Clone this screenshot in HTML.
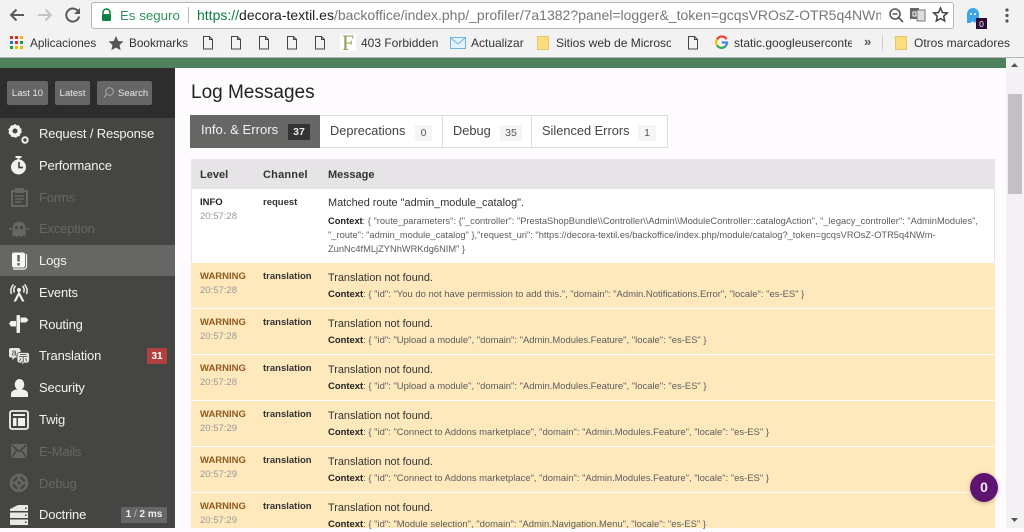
<!DOCTYPE html>
<html><head><meta charset="utf-8"><style>
*{box-sizing:border-box}
html,body{margin:0;padding:0;width:1024px;height:528px;overflow:hidden;background:#fdfbfd;font-family:"Liberation Sans",Arial,sans-serif}
.a{position:absolute;white-space:nowrap}
svg{position:absolute;overflow:visible}
.bm{font-size:11.8px;color:#333;top:36px;line-height:14px}
.nav{position:absolute;left:39px;margin-top:1px;font-size:13px;color:#f2f2f0;line-height:16px;white-space:nowrap;letter-spacing:-.15px}
.nav.d{color:#666764}
.row{position:absolute;left:191px;width:804px;background:#fee9bd}
.lv{position:absolute;left:9px;top:6.500px;font-size:9.5px;font-weight:bold;color:#8e5a1e;line-height:13px}
.tm{position:absolute;left:9px;top:20.500px;font-size:9.5px;color:#999;line-height:13px}
.ch{position:absolute;left:72px;top:6.500px;font-size:9.5px;font-weight:bold;color:#333;line-height:13px}
.ms{position:absolute;left:137px;top:8px;font-size:10.9px;color:#333;line-height:14px;white-space:nowrap}
.cx{position:absolute;left:137px;top:25px;font-size:9.45px;color:#5c5c5c;line-height:14px;white-space:nowrap}
.cx b{color:#222}
.tab{position:absolute;top:115px;height:33px;background:#fff;border:1px solid #ddd;border-left:0;font-size:12.8px;color:#444}
.tab span{position:absolute;top:6px;line-height:17px;white-space:nowrap}
.tab i{position:absolute;font-style:normal;top:9px;height:16px;background:#f5f5f5;color:#555;font-size:10.5px;line-height:17px;text-align:center}
</style></head><body>

<!-- browser chrome -->
<div class="a" style="left:0;top:0;width:1024px;height:58px;background:#f2f2f2;border-bottom:1px solid #b5b5b5"></div>
<svg style="left:0;top:0" width="90" height="30" fill="none"><path d="M24 15H11M16.500 9.500L11 15l5.500 5.500" stroke="#5a5a5a" stroke-width="2"/><path d="M38 15h13M45.500 9.500L51 15l-5.500 5.500" stroke="#c4c4c4" stroke-width="2"/><path d="M78.500 12a6.500 6.500 0 1 0 .6 4.500" stroke="#5a5a5a" stroke-width="2"/><path d="M80 8v6h-6z" fill="#5a5a5a"/></svg>
<div class="a" style="left:91px;top:2px;width:863px;height:27px;background:#fff;border:1px solid #b4b4b4;border-radius:3px"></div>
<svg style="left:100px;top:8px" width="14" height="14"><path d="M3 6V4.500a3.500 3.500 0 0 1 7 0V6" fill="none" stroke="#0b8043" stroke-width="1.500"/><rect x="2" y="6" width="9" height="7" rx="1" fill="#0b8043"/></svg>
<div class="a" style="left:120px;top:7px;font-size:13.300px;line-height:17px;color:#0b8043;opacity:.85">Es seguro</div>
<div class="a" style="left:188px;top:7px;width:1px;height:16px;background:#bbb"></div>
<div class="a" style="left:197px;top:7px;width:684px;overflow:hidden;font-size:14px;line-height:17px;color:#777"><span style="color:#0b8043">https://</span><span style="color:#222">decora-textil.es</span>/backoffice/index.php/_profiler/7a1382?panel=logger&amp;_token=gcqsVROsZ-OTR5q4NWm</div>
<svg style="left:888px;top:7px" width="16" height="16" fill="none" stroke="#555" stroke-width="1.600"><circle cx="7" cy="7" r="5"/><path d="M11 11l4 4M4.500 7h5"/></svg>
<svg style="left:910px;top:7px" width="16" height="16"><rect x="0" y="1" width="9" height="11" fill="#666"/><rect x="7" y="3" width="8" height="11" fill="#ddd" stroke="#777"/><path d="M3 5h3v4H3z" fill="none" stroke="#fff"/></svg>
<svg style="left:932px;top:6px" width="17" height="17"><path d="M8.500 2l2 4.500 4.800.5-3.600 3.200 1 4.800-4.200-2.500L4.300 15l1-4.800L1.700 7l4.800-.5z" fill="none" stroke="#444" stroke-width="1.500"/></svg>
<svg style="left:966px;top:7px" width="14" height="18"><path d="M1 16V7a6 6 0 0 1 12 0v9l-2.500-2-2 2-2-2-2 2z" fill="#3da4e8"/><circle cx="5" cy="7" r="1" fill="#fff"/><circle cx="9" cy="7" r="1" fill="#fff"/></svg>
<div class="a" style="left:976px;top:18px;width:11px;height:11px;background:#2a0a36;color:#fff;font-size:8.500px;line-height:12px;text-align:center">0</div>
<svg style="left:1005px;top:8px" width="4" height="15" fill="#555"><circle cx="2" cy="2" r="1.600"/><circle cx="2" cy="7.500" r="1.600"/><circle cx="2" cy="13" r="1.600"/></svg>

<!-- bookmarks -->
<svg style="left:10px;top:36px" width="14" height="14"><g fill="#d93025"><rect width="3" height="3"/><rect x="5" width="3" height="3"/></g><rect x="10" width="3" height="3" fill="#f4b400"/><g fill="#1a73e8"><rect y="5" width="3" height="3"/><rect x="5" y="5" width="3" height="3" fill="#d93025"/><rect x="10" y="5" width="3" height="3" fill="#0f9d58"/></g><rect y="10" width="3" height="3" fill="#0f9d58"/><rect x="5" y="10" width="3" height="3" fill="#f4b400"/><rect x="10" y="10" width="3" height="3" fill="#f4b400"/></svg>
<div class="a bm" style="left:30px">Aplicaciones</div>
<svg style="left:108px;top:35px" width="16" height="16"><path d="M8 1l2.200 5 5.300.5-4 3.500 1.200 5.200L8 12.500 3.300 15.200 4.500 10 .5 6.500 5.800 6z" fill="#555"/></svg>
<div class="a bm" style="left:129px">Bookmarks</div>
<svg style="left:0;top:0" width="0" height="0"><defs><path id="pg" d="M.5.500h6l3 3v9.500h-9zM6.500.500v3h3" fill="none" stroke="#444"/></defs></svg>
<svg style="left:203px;top:36px" width="11" height="14"><use href="#pg"/></svg>
<svg style="left:231px;top:36px" width="11" height="14"><use href="#pg"/></svg>
<svg style="left:259px;top:36px" width="11" height="14"><use href="#pg"/></svg>
<svg style="left:287px;top:36px" width="11" height="14"><use href="#pg"/></svg>
<svg style="left:315px;top:36px" width="11" height="14"><use href="#pg"/></svg>
<div class="a" style="left:340px;top:34px;width:16px;height:17px;background:#fff;color:#9a9a5a;font-family:'Liberation Serif',serif;font-size:22px;line-height:18px;text-align:center">F</div>
<div class="a bm" style="left:361px;font-size:12px">403 Forbidden</div>
<svg style="left:450px;top:37px" width="16" height="12"><rect x=".5" y=".5" width="15" height="11" fill="#e4f2fb" stroke="#6fb3e0"/><path d="M.5.500L8 7l7.500-6.500" fill="none" stroke="#6fb3e0"/></svg>
<div class="a bm" style="left:471px;font-size:12px">Actualizar</div>
<svg style="left:537px;top:36px" width="12" height="14"><rect x=".5" y=".5" width="11" height="13" fill="#fbdd7e" stroke="#e5c66c"/></svg>
<div class="a bm" style="left:556px;width:115px;overflow:hidden;font-size:12px">Sitios web de Microso</div>
<svg style="left:688px;top:36px" width="11" height="14"><use href="#pg"/></svg>
<svg style="left:715px;top:36px" width="13" height="13" fill="none" stroke-width="2.200"><path d="M11.500 3.200A5.400 5.400 0 0 0 2 3.500" stroke="#ea4335"/><path d="M2 3.500a5.400 5.400 0 0 0 0 5.800" stroke="#fbbc05"/><path d="M2 9.300a5.400 5.400 0 0 0 8.600.8" stroke="#34a853"/><path d="M10.600 10.100A5.400 5.400 0 0 0 12 6.500H6.800" stroke="#4285f4"/></svg>
<div class="a bm" style="left:734px;width:118px;overflow:hidden;font-size:12px">static.googleuserconte</div>
<div class="a" style="left:864px;top:35px;font-size:13px;line-height:14px;color:#555;font-weight:bold">»</div>
<div class="a" style="left:882px;top:35px;width:1px;height:16px;background:#ccc"></div>
<svg style="left:895px;top:36px" width="12" height="14"><rect x=".5" y=".5" width="11" height="13" fill="#fbdd7e" stroke="#e5c66c"/></svg>
<div class="a bm" style="left:914px;font-size:12px">Otros marcadores</div>

<!-- page -->
<div class="a" style="left:0;top:58px;width:1006px;height:10px;background:#4f805c"></div>
<div class="a" style="left:0;top:68px;width:175px;height:50px;background:#2d2d2d"></div>
<div class="a" style="left:0;top:118px;width:175px;height:410px;background:#454643"></div>
<div class="a" style="left:7px;top:81px;width:41px;height:24px;background:#666;border-radius:2px;color:#e8e8e8;font-size:9.500px;line-height:25px;text-align:center">Last 10</div>
<div class="a" style="left:55px;top:81px;width:35px;height:24px;background:#666;border-radius:2px;color:#e8e8e8;font-size:9.500px;line-height:25px;text-align:center">Latest</div>
<div class="a" style="left:97px;top:81px;width:55px;height:24px;background:#666;border-radius:2px;color:#e8e8e8;font-size:9.500px;line-height:25px;padding-left:21px">Search</div>
<svg style="left:103px;top:87px" width="11" height="12" fill="none" stroke="#aaa" stroke-width="1"><circle cx="6.500" cy="4.500" r="3.800"/><path d="M3.800 7.300L.8 10.500"/></svg>

<!-- nav -->
<div class="a" style="left:0;top:245px;width:175px;height:31px;background:#666764"></div>
<div class="nav" style="top:125px">Request / Response</div>
<div class="nav" style="top:157px">Performance</div>
<div class="nav d" style="top:189px">Forms</div>
<div class="nav d" style="top:220px">Exception</div>
<div class="nav" style="top:252px">Logs</div>
<div class="nav" style="top:284px">Events</div>
<div class="nav" style="top:316px">Routing</div>
<div class="nav" style="top:347px">Translation</div>
<div class="nav" style="top:379px">Security</div>
<div class="nav" style="top:411px">Twig</div>
<div class="nav d" style="top:443px">E-Mails</div>
<div class="nav d" style="top:475px">Debug</div>
<div class="nav" style="top:506px">Doctrine</div>

<!-- nav icons -->
<svg style="left:8px;top:124px" width="22" height="22" fill="none" stroke="#f0f0ee"><circle cx="7" cy="7" r="4.300" stroke-width="3.600"/><circle cx="7" cy="7" r="6.200" stroke-width="1" stroke-dasharray="2 2"/><circle cx="17" cy="16" r="2.700" stroke-width="2"/></svg>
<svg style="left:9px;top:156px" width="20" height="20"><rect x="6.500" y="0" width="6" height="2" fill="#f0f0ee"/><rect x="8.500" y="1" width="2" height="3" fill="#f0f0ee"/><circle cx="9.500" cy="11" r="7.500" fill="#f0f0ee"/><path d="M10 6v5.500h4" fill="none" stroke="#454643" stroke-width="1.700"/></svg>
<svg style="left:11px;top:188px" width="17" height="19" fill="none" stroke="#666764" stroke-width="2"><rect x="1" y="3" width="15" height="15"/><rect x="5" y="1" width="7" height="3" fill="#666764"/><path d="M4 8h9M4 11h9M4 14h6" stroke-width="1.500"/></svg>
<svg style="left:9px;top:221px" width="20" height="17" fill="#666764"><path d="M3.500 7a6.500 6.500 0 0 1 13 0v9l-2.500-1.500-2 1.500-2-1.500-2 1.500-2-1.500L3.500 16z"/><path d="M0 7h3v1.500H0zM17 7h3v1.500h-3z"/><rect x="6" y="5" width="3" height="3" fill="#454643"/><rect x="11" y="5" width="3" height="3" fill="#454643"/></svg>
<svg style="left:11px;top:252px" width="17" height="19"><rect x="1" y="0.500" width="13" height="15" rx="2" fill="#f8f8f6"/><rect x="6.300" y="3" width="2.500" height="6.500" fill="#666764"/><rect x="6.300" y="11" width="2.500" height="2.500" fill="#666764"/><path d="M15.500 2v12.500a2.500 2.500 0 0 1-2.500 2.500H2" fill="none" stroke="#f5f5f3" stroke-width="1.200"/></svg>
<svg style="left:9px;top:283px" width="20" height="20" fill="none" stroke="#f0f0ee" stroke-width="1.600"><circle cx="10" cy="7" r="2" fill="#f0f0ee" stroke="none"/><path d="M10 8L4.500 18.500h2.500L10 12.500l3 6h2.500z" fill="#f0f0ee" stroke="none"/><path d="M5.500 9.500a5.500 5.500 0 0 1 1-6.500M14.500 9.500a5.500 5.500 0 0 0-1-6.500M2.500 11a9 9 0 0 1 2-9.500M17.500 11a9 9 0 0 0-2-9.500"/></svg>
<svg style="left:9px;top:315px" width="20" height="20" fill="#f0f0ee"><rect x="7.500" y="0" width="3.500" height="18" rx="1"/><path d="M0 8.500L2 6h5v5.500H2zM11.500 2.500h5.500l2.500 2.500-2.500 2.500h-5.500z"/></svg>
<svg style="left:9px;top:346px" width="21" height="21"><path d="M2 2h7a2.500 2.500 0 0 1 2.500 2.500V9A2.500 2.500 0 0 1 9 11.500H6L3.500 14v-2.500H2A2 2 0 0 1 0 9.500V4a2 2 0 0 1 2-2z" fill="#e8e8e6"/><text x="2.500" y="9.500" font-size="9" fill="#454643" font-family="Liberation Sans, sans-serif">a</text><path d="M10.500 6.500h8a2.500 2.500 0 0 1 2 2.500v5.500a2.500 2.500 0 0 1-2.500 2.500H15l-2 3v-3h-2.500A2.500 2.500 0 0 1 8 14.500V9a2.500 2.500 0 0 1 2.500-2.500z" fill="#e8e8e6" stroke="#454643" stroke-width=".8"/><text x="9.500" y="15.500" font-size="9.500" fill="#454643" font-family="Noto Sans CJK SC, sans-serif">示</text></svg>
<svg style="left:11px;top:379px" width="17" height="18" fill="#f0f0ee"><ellipse cx="8.500" cy="5.500" rx="4.800" ry="5.500"/><path d="M0 18v-3c0-3 3-4 5-4.500h7c2 .5 5 1.500 5 4.500v3z"/></svg>
<svg style="left:9px;top:410px" width="20" height="20" fill="none"><rect x="1" y="1" width="18" height="18" rx="2" stroke="#f0f0ee" stroke-width="1.800"/><path d="M4 5h12" stroke="#f0f0ee" stroke-width="2"/><rect x="4" y="8" width="3.500" height="8" fill="#f0f0ee"/><rect x="9" y="8" width="7" height="8" fill="#f0f0ee"/></svg>
<svg style="left:11px;top:444px" width="16" height="14" fill="none"><rect width="16" height="14" fill="#666764"/><path d="M.5 1L8 7.500 15.500 1M.5 13.500L6 6M15.500 13.500L10 6" stroke="#454643" stroke-width="1.500"/></svg>
<svg style="left:9px;top:473px" width="20" height="20" fill="none" stroke="#666764"><circle cx="10" cy="10" r="8" stroke-width="2.500"/><circle cx="10" cy="10" r="3" stroke-width="2.500"/><path d="M10 1v5M10 14v5M1 10h5M14 10h5" stroke-width="2.500"/></svg>
<svg style="left:10px;top:505px" width="18" height="21"><path d="M0 4L8 0h10v6H0z" fill="#e8e8e6"/><rect x="0" y="7.500" width="18" height="5.500" fill="#e8e8e6"/><rect x="0" y="14.500" width="18" height="5.500" fill="#e8e8e6"/><rect x="15" y="2.500" width="1.500" height="1.500" fill="#454643"/><rect x="15" y="9.500" width="1.500" height="1.500" fill="#454643"/><rect x="15" y="16.500" width="1.500" height="1.500" fill="#454643"/></svg>

<div class="a" style="left:147px;top:348px;width:20px;height:16px;background:#b0413e;color:#fff;font-size:10px;font-weight:bold;line-height:17px;text-align:center">31</div>
<div class="a" style="left:121px;top:507px;width:46px;height:16px;background:#666;color:#eee;font-size:10px;font-weight:bold;line-height:16px;text-align:center">1 <span style="font-weight:normal;color:#bbb">/</span> 2 ms</div>

<!-- content -->
<div class="a" style="left:191px;top:81px;font-size:19px;line-height:24px;color:#222">Log Messages</div>

<div class="a" style="left:190px;top:115px;width:130px;height:33px;background:#666764"><span class="a" style="left:11px;top:6px;line-height:17px;font-size:13.100px;color:#f2f2f2">Info. &amp; Errors</span><span class="a" style="left:98px;top:9px;width:22px;height:16px;background:#333;color:#eee;font-size:10.500px;font-weight:bold;line-height:17px;text-align:center">37</span></div>
<div class="tab" style="left:320px;width:123px"><span style="left:10px">Deprecations</span><i style="left:95px;width:17px">0</i></div>
<div class="tab" style="left:443px;width:89px"><span style="left:10px">Debug</span><i style="left:57px;width:22px">35</i></div>
<div class="tab" style="left:532px;width:136px"><span style="left:10px">Silenced Errors</span><i style="left:106px;width:18px">1</i></div>

<div class="a" style="left:191px;top:159px;width:804px;height:30px;background:#e6e4e7"></div>
<div class="a" style="left:200px;top:168px;font-size:11px;font-weight:bold;color:#333;line-height:14px">Level</div>
<div class="a" style="left:263px;top:168px;font-size:11px;font-weight:bold;color:#333;line-height:14px;letter-spacing:.2px">Channel</div>
<div class="a" style="left:328px;top:168px;font-size:11px;font-weight:bold;color:#333;line-height:14px">Message</div>

<div class="row" style="top:189px;height:73px;background:#fff;border-left:1px solid #e6e4e7;border-right:1px solid #e6e4e7">
<div class="lv" style="left:8px;color:#222">INFO</div><div class="tm" style="left:8px">20:57:28</div><div class="ch" style="left:71px">request</div>
<div class="ms" style="left:136px;top:7px">Matched route "admin_module_catalog".</div>
<div class="cx" style="left:136px;top:25px;font-size:9.3px"><b>Context</b>: { "route_parameters": {"_controller": "PrestaShopBundle\\Controller\\Admin\\ModuleController::catalogAction", "_legacy_controller": "AdminModules",<br>"_route": "admin_module_catalog" },"request_uri": "https://decora-textil.es/backoffice/index.php/module/catalog?_token=gcqsVROsZ-OTR5q4NWm-<br>ZunNc4fMLjZYNhWRKdg6NIM" }</div>
</div>
<div class="row" style="top:263px;height:45px"><div class="lv">WARNING</div><div class="tm">20:57:28</div><div class="ch">translation</div><div class="ms">Translation not found.</div><div class="cx"><b>Context</b>: { "id": "You do not have permission to add this.", "domain": "Admin.Notifications.Error", "locale": "es-ES" }</div></div>
<div class="row" style="top:309px;height:45px"><div class="lv">WARNING</div><div class="tm">20:57:28</div><div class="ch">translation</div><div class="ms">Translation not found.</div><div class="cx"><b>Context</b>: { "id": "Upload a module", "domain": "Admin.Modules.Feature", "locale": "es-ES" }</div></div>
<div class="row" style="top:355px;height:45px"><div class="lv">WARNING</div><div class="tm">20:57:28</div><div class="ch">translation</div><div class="ms">Translation not found.</div><div class="cx"><b>Context</b>: { "id": "Upload a module", "domain": "Admin.Modules.Feature", "locale": "es-ES" }</div></div>
<div class="row" style="top:401px;height:45px"><div class="lv">WARNING</div><div class="tm">20:57:29</div><div class="ch">translation</div><div class="ms">Translation not found.</div><div class="cx"><b>Context</b>: { "id": "Connect to Addons marketplace", "domain": "Admin.Modules.Feature", "locale": "es-ES" }</div></div>
<div class="row" style="top:447px;height:45px"><div class="lv">WARNING</div><div class="tm">20:57:29</div><div class="ch">translation</div><div class="ms">Translation not found.</div><div class="cx"><b>Context</b>: { "id": "Connect to Addons marketplace", "domain": "Admin.Modules.Feature", "locale": "es-ES" }</div></div>
<div class="row" style="top:493px;height:35px"><div class="lv">WARNING</div><div class="tm">20:57:29</div><div class="ch">translation</div><div class="ms">Translation not found.</div><div class="cx"><b>Context</b>: { "id": "Module selection", "domain": "Admin.Navigation.Menu", "locale": "es-ES" }</div></div>

<!-- scrollbar -->
<div class="a" style="left:1006px;top:58px;width:18px;height:470px;background:#f3f1f3"></div>
<div class="a" style="left:1008px;top:94px;width:14px;height:100px;background:#c2c0c3"></div>
<svg style="left:1010px;top:62px" width="10" height="6"><path d="M1 5L4.500 1 8 5z" fill="#555"/></svg>
<svg style="left:1010px;top:517px" width="10" height="6"><path d="M1 1h7L4.500 5z" fill="#555"/></svg>

<!-- badge -->
<div class="a" style="left:970px;top:473px;width:28px;height:29px;border-radius:50%;background:#5f1570;box-shadow:0 1px 4px rgba(0,0,0,.25);color:#f4eaf6;font-size:14px;font-weight:bold;line-height:28px;text-align:center">0</div>
</body></html>
